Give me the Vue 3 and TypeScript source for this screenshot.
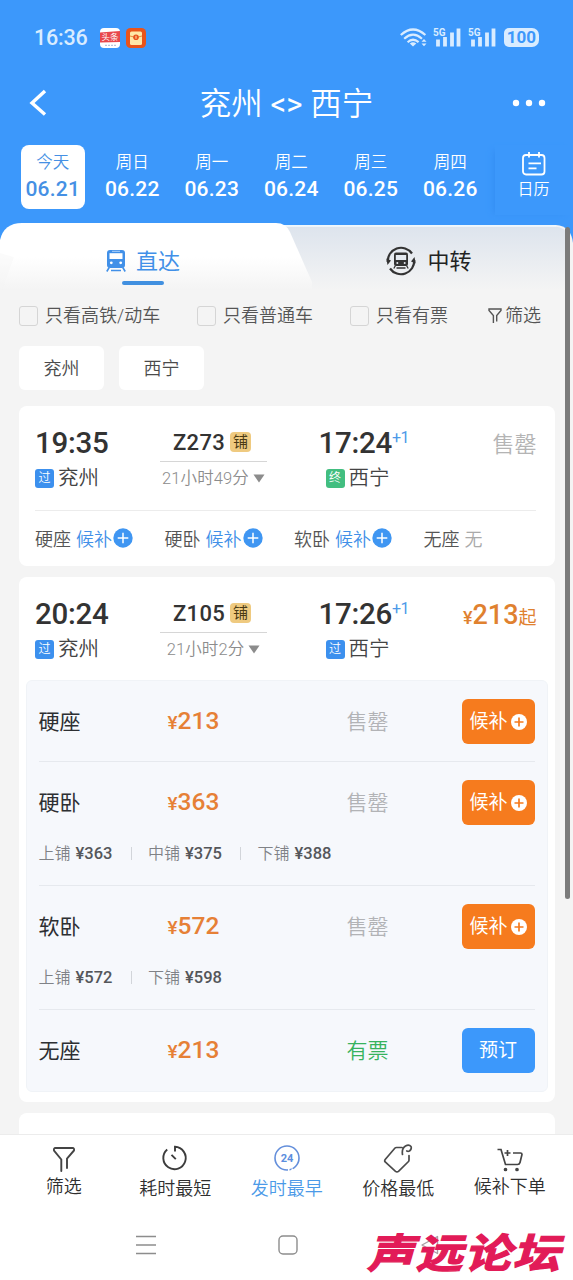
<script setup lang="ts">
interface DateItem { day: string; date: string }
interface Stop { time: string; mark: string; name: string; end?: boolean }
interface Fare { name: string; price: string; status: string; bookable?: boolean; berths?: { label: string; price: string }[] }
interface Train { no: string; duration: string; from: Stop; to: Stop; price?: string; seats?: { name: string; wait: boolean }[]; fares?: Fare[] }

const dates: DateItem[] = [
  { day: '今天', date: '06.21' },
  { day: '周日', date: '06.22' },
  { day: '周一', date: '06.23' },
  { day: '周二', date: '06.24' },
  { day: '周三', date: '06.25' },
  { day: '周四', date: '06.26' },
]
const checks = ['只看高铁/动车', '只看普通车', '只看有票']
const stations = ['兖州', '西宁']
const trains: Train[] = [
  {
    no: 'Z273', duration: '21小时49分',
    from: { time: '19:35', mark: '过', name: '兖州' },
    to: { time: '17:24', mark: '终', name: '西宁', end: true },
    seats: [
      { name: '硬座', wait: true },
      { name: '硬卧', wait: true },
      { name: '软卧', wait: true },
      { name: '无座', wait: false },
    ],
  },
  {
    no: 'Z105', duration: '21小时2分', price: '213',
    from: { time: '20:24', mark: '过', name: '兖州' },
    to: { time: '17:26', mark: '过', name: '西宁' },
    fares: [
      { name: '硬座', price: '213', status: '售罄' },
      { name: '硬卧', price: '363', status: '售罄', berths: [{ label: '上铺', price: '¥363' }, { label: '中铺', price: '¥375' }, { label: '下铺', price: '¥388' }] },
      { name: '软卧', price: '572', status: '售罄', berths: [{ label: '上铺', price: '¥572' }, { label: '下铺', price: '¥598' }] },
      { name: '无座', price: '213', status: '有票', bookable: true },
    ],
  },
]
</script>

<template>
  <div class="screen">
    <header class="top">
      <div class="status">
        <span class="clock">16:36</span>
        <svg class="app1" width="20" height="20" viewBox="0 0 20 20">
          <rect width="20" height="20" rx="4" fill="#fff" />
          <path d="M0 4.500 20 3v11L0 14.500z" fill="#e8474c" />
          <text x="10" y="12.200" font-size="8.500" font-weight="400" text-anchor="middle" fill="#fff">头条</text>
          <path d="M5 17.400h11" stroke="#b9c4dd" stroke-width="1.300" stroke-dasharray="2 1" />
        </svg>
        <svg class="app2" width="20" height="20" viewBox="0 0 20 20">
          <rect width="20" height="20" rx="4.500" fill="#e9541b" />
          <rect x="4" y="3.500" width="12" height="13.500" rx="1.500" fill="#ffe7a8" />
          <path d="M4 8q6 3 12 0" stroke="#e9893c" fill="none" />
          <circle cx="10" cy="9.300" r="2.800" fill="#e8501d" />
          <path d="M10 7.800v3" stroke="#ffe7a8" />
        </svg>
        <span class="grow"></span>
        <svg class="wifi" width="28" height="20" viewBox="0 0 28 20">
          <g fill="none" stroke="#d9ecff" stroke-width="2.200">
            <path d="M.8 7Q13 -4 25.400 7" />
            <path d="M4.200 10.700Q13 2.700 22 10.700" />
            <path d="M7.600 14.200Q13 9.300 18.600 14.200" />
          </g>
          <path d="M9.800 15.500Q13 13.200 16.300 15.500L13 18.600z" fill="#d9ecff" />
          <path d="M21.500 13.800 24 11l2.500 2.800zM21.500 15.400 24 18.200l2.500-2.800z" fill="#d9ecff" />
        </svg>
        <svg v-for="n in 2" :key="n" class="signal" width="28" height="21" viewBox="0 0 28 21">
          <text x="0" y="8.500" font-size="10.500" font-weight="700" fill="#d9ecff" textLength="12.500" lengthAdjust="spacingAndGlyphs">5G</text>
          <path d="M5 12.500v7M12 10v9.500M19 5.500v14M25.500 1.500v18" stroke="#d9ecff" stroke-width="3.800" />
        </svg>
        <span class="battery">100</span>
      </div>
      <div class="nav">
        <svg class="back" width="20" height="28" viewBox="0 0 20 28"><path d="M18 2 5 14l13 11.500" fill="none" stroke="#fff" stroke-width="3.400" /></svg>
        <h1>兖州 <span>&lt;&gt;</span> 西宁</h1>
        <svg width="34" height="8" viewBox="0 0 34 8"><g fill="#fff"><circle cx="4" cy="4" r="3.200" /><circle cx="17" cy="4" r="3.200" /><circle cx="30" cy="4" r="3.200" /></g></svg>
      </div>
      <div class="dates">
        <div v-for="(d, i) in dates" :key="d.date" class="date">
          <div class="pill" :class="{ on: i === 0 }"><span>{{ d.day }}</span><b>{{ d.date }}</b></div>
        </div>
        <div class="calendar">
          <svg width="24" height="24" viewBox="0 0 24 24" fill="none" stroke="#fff" stroke-width="1.800">
            <rect x="1" y="3" width="21.500" height="19.500" rx="3" />
            <path d="M7 0v5.500M17 0v5.500M6.500 11.300h12.500M6.500 16.300h8" />
          </svg>
          <span>日历</span>
        </div>
      </div>
    </header>

    <main>
      <div class="tabs">
        <svg class="tabshape" width="573" height="67" viewBox="0 0 573 67">
          <defs>
            <linearGradient id="tg" x1="0" y1="0" x2="0" y2="1"><stop offset=".5" stop-color="#fff" /><stop offset="1" stop-color="#f4f4f4" /></linearGradient>
            <linearGradient id="rg" x1="0" y1="0" x2="0" y2="1"><stop offset="0" stop-color="#dde4ed" /><stop offset="1" stop-color="#f4f4f4" /></linearGradient>
          </defs>
          <path d="M0 67V22Q3 2 22 2H556Q571 3 573 20V67Z" fill="#f4f4f4" />
          <path d="M270 3.500H554Q566 4 570 14V67H270Z" fill="url(#rg)" />
          <path d="M270 3H556" stroke="#eef8ff" stroke-width="1.500" />
          <path d="M0 67V17Q4 0 22 0H276Q286 0 290 9L312 59V67Z" fill="url(#tg)" />
          <path d="M0 67V30L14 34 2 67Z" fill="#f4f4f4" opacity=".4" />
        </svg>
        <div class="tab active">
          <svg width="20" height="22" viewBox="0 0 20 22">
            <path d="M4 0h12q3 0 3 3v12q0 3-3 3h-12q-3 0-3-3V3Q1 0 4 0z" fill="#4190e8" />
            <path d="M3.500 3.200h13v5.800h-13z" fill="#fff" /><path d="M6 1.300h8" stroke="#cfe4fc" stroke-width=".8" />
            <circle cx="5.300" cy="12.800" r="1.400" fill="#fff" /><circle cx="14.700" cy="12.800" r="1.400" fill="#fff" />
            <path d="M3.200 17.500 .8 21.500M16.800 17.500l2.400 4M5 20.500h10" stroke="#4190e8" stroke-width="1.600" />
          </svg>
          <span>直达</span>
        </div>
        <div class="tab">
          <svg width="30" height="30" viewBox="0 0 30 30">
            <g fill="none" stroke="#333" stroke-width="2.200">
              <path d="M1.800 16A13.300 13.300 0 0 1 26 7.500" />
              <path d="M28.200 14A13.300 13.300 0 0 1 4 22.500" />
            </g>
            <path d="M.3 12.500 5 14.500l-3.500 4.500zM29.700 17.500 25 15.500l3.500-4.500z" fill="#333" />
            <path d="M10 6.500h10q2 0 2 2V18q0 2-2 2h-10q-2 0-2-2V8.500Q8 6.500 10 6.500z" fill="#333" />
            <path d="M9.800 9h10.400v5H9.800z" fill="#e5eaf0" />
            <circle cx="11.300" cy="17" r="1" fill="#e5eaf0" /><circle cx="18.700" cy="17" r="1" fill="#e5eaf0" />
            <path d="M9.500 19.500 7.800 22.500M20.500 19.500l1.700 3M10.500 22h9" stroke="#333" stroke-width="1.300" />
          </svg>
          <span>中转</span>
        </div>
      </div>

      <div class="filters">
        <label v-for="c in checks" :key="c"><i></i>{{ c }}</label>
        <div class="sift">
          <svg width="14" height="16" viewBox="0 0 14 16"><path d="M5.400 15V7.500L1 2.500V1h12v1.500l-4.300 5V13.500" fill="none" stroke="#555" stroke-width="1.400" /></svg>筛选
        </div>
      </div>
      <div class="chips"><span v-for="s in stations" :key="s">{{ s }}</span></div>

      <article v-for="t in trains" :key="t.no" class="card">
        <div class="head">
          <div class="stop">
            <b>{{ t.from.time }}</b>
            <div class="place"><i>{{ t.from.mark }}</i>{{ t.from.name }}</div>
          </div>
          <div class="mid">
            <div class="no"><b>{{ t.no }}</b><i>铺</i></div>
            <div class="dur">{{ t.duration }}<svg width="12" height="9" viewBox="0 0 12 9"><path d="M.5.500h11L6 8.500z" fill="#8c8c8c" /></svg></div>
          </div>
          <div class="stop arrive">
            <b>{{ t.to.time }}<sup>+1</sup></b>
            <div class="place"><i :class="{ end: t.to.end }">{{ t.to.mark }}</i>{{ t.to.name }}</div>
          </div>
          <div v-if="t.price" class="from"><small>¥</small>{{ t.price }}<em>起</em></div>
          <div v-else class="sold">售罄</div>
        </div>

        <div v-if="t.seats" class="seats">
          <div v-for="s in t.seats" :key="s.name">
            {{ s.name }}
            <template v-if="s.wait"><span class="wait">候补</span><svg width="20" height="20" viewBox="0 0 20 20"><circle cx="10" cy="10" r="9.700" fill="#3f96f2" /><path d="M10 4.700v10.600M4.700 10h10.600" stroke="#fff" stroke-width="1.500" /></svg></template>
            <span v-else class="none">无</span>
          </div>
        </div>

        <div v-if="t.fares" class="fares">
          <div v-for="f in t.fares" :key="f.name" class="fare">
            <div class="row">
              <span class="name">{{ f.name }}</span>
              <span class="price"><small>¥</small>{{ f.price }}</span>
              <span class="state" :class="{ ok: f.bookable }">{{ f.status }}</span>
              <button v-if="f.bookable" class="book">预订</button>
              <button v-else>候补<svg width="16" height="16" viewBox="0 0 16 16"><circle cx="8" cy="8" r="8" fill="#fff" /><path d="M8 3.500v9M3.500 8h9" stroke="#f67b1e" stroke-width="1.700" /></svg></button>
            </div>
            <div v-if="f.berths" class="berths">
              <div v-for="b in f.berths" :key="b.label">{{ b.label }}<b>{{ b.price }}</b></div>
            </div>
          </div>
        </div>
      </article>
      <article class="card"></article>
      <div class="scroll"></div>
    </main>

    <footer>
      <div class="sorts">
        <div class="up">
          <svg width="24" height="26" viewBox="0 0 24 26" fill="none" stroke="#444" stroke-width="1.900" stroke-linecap="round"><path d="M9.300 25V13.500L2 4.500Q1.500 2 3.500 2h17q2 0 1.500 2.500L15 12.500V22" /></svg>
          筛选
        </div>
        <div>
          <svg width="26" height="26" viewBox="0 0 26 26" fill="none" stroke="#3c3c3c" stroke-width="1.900"><path d="M5.200 4.500A11.200 11.200 0 1 0 13 1.800V6.500M9.500 9.800l4.300 4.400" /></svg>
          耗时最短
        </div>
        <div class="sel">
          <svg width="28" height="28" viewBox="0 0 28 28">
            <circle cx="14" cy="14" r="12" fill="none" stroke="#648fdb" stroke-width="1.600" />
            <path d="M15 26h7" stroke="#fff" stroke-width="3" stroke-dasharray="1.500 2" />
            <text x="14" y="18" font-size="11" font-weight="700" text-anchor="middle" fill="#5b8ede">24</text>
          </svg>
          发时最早
        </div>
        <div>
          <svg width="30" height="30" viewBox="0 0 30 30" fill="none" stroke="#4b4b4b" stroke-width="1.700" stroke-linecap="round"><path d="M19 4.500H13.500Q12.500 4.500 12 5L2.200 16.500Q1.200 18 2.200 19L12.500 28.300Q14 29.500 15.500 28.300L25.500 18.500Q26 18 26 17V12.500M19.500 11.500Q18.500 5.500 22.500 3Q26 1 28 3.500Q29 6 26.500 8Q25 8.700 23.800 8" /></svg>
          价格最低
        </div>
        <div class="up">
          <svg width="26" height="26" viewBox="0 0 26 26" fill="none" stroke="#444" stroke-width="1.700"><path d="M.5 3.500H4L8.500 18.500H20.500Q22.500 18.500 23 16.500L25 8.500Q25 7 23.500 7H16M7.500 7h6M10.500 4v6" /><circle cx="8.500" cy="23.500" r="1" fill="#444" /><circle cx="20" cy="23.500" r="1" fill="#444" /></svg>
          候补下单
        </div>
      </div>
      <div class="keys">
        <svg width="20" height="20" viewBox="0 0 20 20"><path d="M0 1.500h20M0 10h20M0 18.500h20" stroke="#8d8d8d" stroke-width="1.500" /></svg>
        <svg width="20" height="20" viewBox="0 0 20 20"><rect x="1" y="1" width="18" height="18" rx="4" fill="none" stroke="#8d8d8d" stroke-width="1.400" /></svg>
        <svg width="20" height="20" viewBox="0 0 20 20"><path d="M17.500 1.500v17L2 10z" fill="none" stroke="#a9a0a4" stroke-width="1.400" stroke-linejoin="round" /></svg>
      </div>
      <div class="mark">声远论坛</div>
    </footer>
  </div>
</template>

<style>
html, body { margin: 0; background: #f4f4f4; overflow: hidden; }
</style>

<style scoped>
* { box-sizing: border-box; }
.screen { position: relative; width: 573px; height: 1280px; overflow: hidden; display: flex; flex-direction: column; background: #f4f4f4; color: #333; font-family: Roboto, "Noto Sans CJK SC", sans-serif; font-weight: 350; }
svg { display: block; flex: none; }
i, em { font-style: normal; }
b { font-weight: 500; }
.top { height: 223px; background: #3c98fb; color: #fff; flex: none; }
.status { display: flex; align-items: center; height: 75px; padding: 0 34px 0 34px; color: #d9ecff; }
.clock { width: 66px; font: 500 21.500px/26px Roboto, sans-serif; letter-spacing: -.2px; }
.app2 { margin-left: 6px; }
.grow { flex: 1; }
.wifi { margin-right: 5px; }
.signal { margin-right: 7px; }
.signal + .battery { margin-left: 1px; }
.battery { width: 35px; height: 19px; border-radius: 5px 7px 7px 5px; background: #d9ecff; color: #3c98fb; font: 700 17px/19px Roboto, sans-serif; text-align: center; }
.nav { display: flex; align-items: center; justify-content: space-between; height: 56px; padding: 0 27px; }
.back { margin-right: 14px; }
h1 { margin: 3px 0 0; font-size: 31.500px; line-height: 40px; font-weight: 350; }
h1 span { font-size: 31px; font-weight: 400; }
.dates { display: flex; padding: 14px 0 0 13px; height: 92px; }
.date { width: 79.500px; display: flex; justify-content: center; }
.pill { width: 64px; height: 64px; padding-top: 5px; border-radius: 8px; display: flex; flex-direction: column; align-items: center; font-size: 16.500px; line-height: 23px; }
.pill span { position: relative; top: 1px; }
.pill b { font-size: 21px; line-height: 32px; letter-spacing: .2px; }
.pill.on { background: #fff; color: #4590e4; }
.calendar { margin-left: 4.500px; width: 78px; height: 70px; padding-top: 7px; display: flex; flex-direction: column; align-items: center; font-size: 16px; line-height: 28px; box-shadow: -5px 2px 6px -4px #338df2; }
main { position: relative; height: 911px; flex: none; overflow: hidden; background: linear-gradient(#3c98fb 40px, #f4f4f4 40px); }
.tabs { position: relative; display: flex; height: 67px; }
.tabshape { position: absolute; left: 0; top: 0; }
.tab { position: relative; width: 286px; display: flex; align-items: center; justify-content: center; gap: 10px; height: 75px; font-size: 22px; font-weight: 400; color: #222; }
.tab span { margin-top: -4px; }
.tab:last-child { gap: 11px; }
.active { color: #4190e8; }
.active::after { content: ""; position: absolute; left: 122px; top: 58px; width: 42px; height: 4px; border-radius: 2px; background: #4190e0; }
.filters { display: grid; grid-template-columns: 178px 153px 138px auto; align-items: center; padding-left: 19px; height: 52px; font-size: 18px; line-height: 22px; color: #555; }
.filters label, .sift { display: flex; align-items: center; }
.filters i { width: 19px; height: 20px; margin: 0 7px 0 0; border: 1.500px solid #d5d5d5; border-radius: 3px; }
.sift svg { margin-right: 3px; }
.chips { display: flex; gap: 15px; padding: 4px 19px 0; height: 64px; }
.chips span { width: 85px; height: 44px; border-radius: 6px; background: #fff; text-align: center; font-size: 18px; line-height: 45px; color: #4b4b4b; }
.card { margin: 0 18.500px 11px 19px; min-height: 60px; border-radius: 8px; background: #fff; overflow: hidden; }
.head { display: flex; height: 104px; padding: 18px 18px 0 16px; }
.stop { width: 125px; }
.stop > b { display: block; height: 37px; font-size: 29.500px; line-height: 38px; letter-spacing: -.25px; white-space: nowrap; }
.place { display: flex; align-items: center; height: 34px; line-height: 34px; font-size: 20.500px; color: #444; }
.place i { width: 19px; height: 19px; margin: 0 4px 0 0; border-radius: 3px; background: #3c90ee; color: #fff; text-align: center; font-size: 12px; line-height: 19px; }
.place i.end { background: #42be80; }
.mid { width: 107px; margin-right: 51.500px; }
.no { display: flex; align-items: center; justify-content: flex-end; height: 37px; padding-right: 16px; }
.no b { font-size: 22px; line-height: 28px; margin: 1px 5px 0 0; letter-spacing: .3px; }
.no i { width: 21px; height: 20px; margin-top: -1px; border-radius: 4px; background: #efca80; color: #4b3a14; font-size: 15px; line-height: 20px; text-align: center; font-weight: 400; }
.dur { display: flex; align-items: center; justify-content: center; gap: 4px; height: 34px; line-height: 28px; border-top: 1.500px solid #d6d6d6; font-size: 16.500px; letter-spacing: .1px; color: #8c8c8c; }
.arrive { width: 140px; }
.arrive .place { padding-left: 7px; }
sup { display: inline-block; vertical-align: 10px; font-size: 16px; line-height: 16px; font-weight: 400; color: #4d99e8; letter-spacing: -.8px; }
.sold, .from { margin-left: auto; height: 40px; line-height: 42px; font-size: 22px; color: #b4b4b4; white-space: nowrap; }
.from { font-size: 27px; line-height: 40px; color: #e0812f; font-weight: 500; }
.from small, .from em { font-size: 18px; font-weight: 400; }
.from small { font-weight: 500; }
.seats { display: grid; grid-template-columns: repeat(4, 129.500px); margin-left: 16px; height: 56px; align-items: center; font-size: 18px; color: #555; position: relative; }
.seats::before { content: ""; position: absolute; top: 0; left: 0; width: 501px; height: 1px; background: #ececec; }
.seats > div { display: flex; align-items: center; }
.wait { margin: 0 1px 0 5px; color: #4190e8; }
.none { margin-left: 5px; color: #aaa; }
.fares { margin: -1px 6.500px 10px; border-radius: 6px; border: 1px solid #f0f3f7; background: #f6f8fc; padding: 0 12px; height: 412px; }
.fare + .fare { border-top: 1px solid #e6e9ee; }
.row { display: grid; grid-template-columns: 129px 179px 115px 73px; align-items: center; height: 80px; padding-top: 1px; }
.name { font-size: 21px; line-height: 28px; font-weight: 400; color: #2d2f32; }
.price { font-size: 24.500px; line-height: 30px; font-weight: 500; color: #e68036; margin-top: 1px; }
.price small { font-size: 19px; }
.state { font-size: 21px; line-height: 28px; color: #b2b3b6; }
.state.ok { color: #37b35d; }
button { width: 73px; height: 45px; padding: 0; border: 0; border-radius: 6px; background: #f67b1e; color: #fff; font: 400 19px/46px Roboto, "Noto Sans CJK SC", sans-serif; display: flex; align-items: center; justify-content: center; gap: 3px; }
button.book { background: #3c98fb; }
.berths { display: flex; height: 43px; padding-top: 2px; line-height: 20px; font-size: 16px; color: #808287; }
.berths div { position: relative; width: 109.500px; white-space: nowrap; }
.berths b { margin-left: 5px; color: #54565a; font-size: 16.500px; }
.berths div:not(:last-child)::after { content: ""; position: absolute; left: 92px; top: 3px; width: 1px; height: 13px; background: #d2d5da; }
.scroll { position: absolute; right: 3px; top: 4px; width: 5px; height: 672px; border-radius: 3px; background: #7b7b7b; }
footer { position: relative; height: 146px; flex: none; background: #fff; border-top: 1px solid #ececec; }
.sorts { display: grid; grid-template-columns: repeat(5, 111.500px); padding-left: 8px; height: 76px; font-size: 18px; color: #2f2f2f; }
.sorts > div { display: flex; flex-direction: column; align-items: center; line-height: 26px; }
.sorts svg { height: 30px; margin: 8px 0 3px; }
.sorts .up svg { margin: 9px 0 0; }
.sorts .sel { color: #4b9ae8; }
.keys { display: flex; padding: 24px 0 0 136px; gap: 122px; }
.mark { position: absolute; left: 371px; top: 93px; width: 194px; font-size: 47px; line-height: 52px; font-weight: 700; white-space: nowrap; color: #e21b58; -webkit-text-stroke: 1.500px #e21b58; transform: skewX(-16deg) scaleY(.86); letter-spacing: 1.500px; }
</style>
